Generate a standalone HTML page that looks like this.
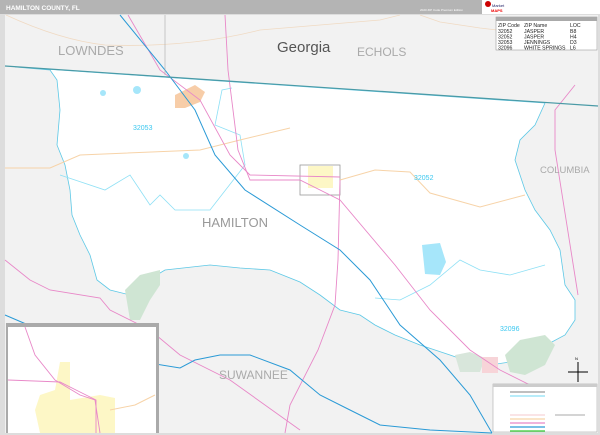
<!DOCTYPE html>
<html><head><meta charset="utf-8"><style>
html,body{margin:0;padding:0;width:600px;height:435px;overflow:hidden;background:#fff;font-family:"Liberation Sans",sans-serif}
</style></head><body>
<svg width="600" height="435" viewBox="0 0 600 435" xmlns="http://www.w3.org/2000/svg" font-family="Liberation Sans, sans-serif">
<rect x="0" y="0" width="600" height="14" fill="#b4b4b4"/>
<text x="6" y="10" font-size="6.5" font-weight="bold" fill="#fff">HAMILTON COUNTY, FL</text>
<text x="420" y="11" font-size="3" fill="#fff">2020 ZIP Code Premium Edition</text>
<rect x="482" y="0" width="118" height="14" fill="#fff"/>
<circle cx="488" cy="4" r="3" fill="#c00"/><text x="492" y="7" font-size="4" fill="#226">Market</text>
<text x="491" y="12" font-size="4" fill="#e00" font-weight="bold">MAPS</text>
<rect x="0" y="14" width="600" height="421" fill="#ddd"/>
<rect x="5" y="15" width="593" height="418" fill="#f2f2f2"/>
<!-- county -->
<path d="M15,67 L50,70 L57,80 L60,110 L57,145 L65,165 L70,190 L72,215 L80,235 L90,255 L97,280 L110,290 L130,295 L140,285 L165,270 L210,265 L240,268 L270,270 L300,282 L320,295 L340,310 L360,315 L375,325 L395,335 L420,345 L450,355 L470,362 L490,365 L510,362 L530,350 L550,343 L565,335 L575,320 L575,300 L565,285 L560,250 L550,230 L535,210 L525,190 L515,160 L520,140 L535,125 L545,103 Z" fill="#fff" stroke="#5cc8e6" stroke-width="0.8"/>
<!-- parks -->
<path d="M125,290 L140,275 L160,270 L160,285 L150,300 L140,320 L130,320 Z" fill="#cfe5d3"/>
<path d="M505,355 L520,340 L545,335 L555,345 L545,365 L525,375 L510,372 Z" fill="#cfe5d3"/>
<path d="M455,355 L470,352 L485,358 L480,372 L460,372 Z" fill="#d8e6db"/>
<rect x="482" y="357" width="16" height="16" fill="#f7d4d8"/>
<path d="M175,95 L195,85 L205,92 L200,102 L185,108 L175,108 Z" fill="#f7cda8"/>
<rect x="300" y="165" width="40" height="30" fill="#fff" stroke="#999" stroke-width="0.8"/>
<rect x="308" y="166" width="25" height="22" fill="#fdf7c6"/>
<!-- lake -->
<path d="M422,245 L440,243 L446,262 L440,275 L425,274 Z" fill="#a6e6fa"/>
<circle cx="186" cy="156" r="3" fill="#a6e6fa"/>
<circle cx="137" cy="90" r="4" fill="#a6e6fa"/>
<circle cx="103" cy="93" r="3" fill="#a6e6fa"/>
<!-- zip boundaries -->
<path d="M60,175 L75,180 L105,190 L130,175 L140,190 L150,205 L160,195 L175,210 L210,210 L245,165 L240,135 L215,125 L222,90 L232,88" fill="none" stroke="#8ee0f5" stroke-width="0.8"/>
<path d="M375,298 L400,300 L430,285 L460,260 L480,270 L510,275 L545,265" fill="none" stroke="#8ee0f5" stroke-width="0.8"/>
<!-- roads -->
<path d="M5,168 L50,168 L80,155 L200,150 L240,140 L290,128" fill="none" stroke="#f7d3a8" stroke-width="1"/>
<path d="M340,180 L375,170 L410,172 L430,193 L480,207 L525,195" fill="none" stroke="#f7d3a8" stroke-width="1"/>
<path d="M6,15 Q60,40 105,45 Q190,48 260,30 L380,20 L400,15" fill="none" stroke="#f0dac3" stroke-width="0.8"/>
<path d="M420,15 L440,22 L480,28 L497,30" fill="none" stroke="#f0dac3" stroke-width="0.8"/>
<!-- pink highways -->
<path d="M128,15 L160,70 L200,100 L230,155 L250,175 L340,177" fill="none" stroke="#e888c8" stroke-width="0.9"/>
<path d="M225,15 L228,70 L238,150 L250,180 L300,180 L340,200 L395,265 L430,310 L470,350 L500,370 L560,400" fill="none" stroke="#e888c8" stroke-width="0.9"/>
<path d="M340,180 L338,260 L335,305 L318,350 L290,405 L285,433" fill="none" stroke="#e888c8" stroke-width="0.9"/>
<path d="M575,85 L555,110 L555,150 L578,295" fill="none" stroke="#e888c8" stroke-width="0.9"/>
<path d="M5,260 L30,280 L50,290 L100,298 L110,310 L150,330 L180,355 L230,380 L300,430" fill="none" stroke="#e888c8" stroke-width="0.9"/>
<!-- blue rail -->
<path d="M120,15 L165,70 L195,110 L215,155 L245,190 L300,225 L340,250 L370,280 L400,325 L440,360 L470,395 L492,433" fill="none" stroke="#2a9ad6" stroke-width="1"/>
<path d="M5,315 L40,330 L100,355 L180,368 L195,360 L220,355 L250,355 L290,370 L320,395 L350,410 L380,425 L430,430 L492,433" fill="none" stroke="#2a9ad6" stroke-width="1"/>
<!-- state line -->
<path d="M5,66 L598,106" stroke="#4a9aa6" stroke-width="1.2"/>
<path d="M165,15 L165,75" stroke="#aaa" stroke-width="0.6"/>
<!-- labels -->
<text x="58" y="55" font-size="13" fill="#aaa">LOWNDES</text>
<text x="277" y="52" font-size="15" fill="#555">Georgia</text>
<text x="357" y="56" font-size="12" fill="#aaa">ECHOLS</text>
<text x="540" y="173" font-size="9.5" fill="#aaa">COLUMBIA</text>
<text x="202" y="227" font-size="13" fill="#999">HAMILTON</text>
<text x="219" y="379" font-size="12" fill="#aaa">SUWANNEE</text>
<text x="133" y="130" font-size="7" fill="#3cc8f0">32053</text>
<text x="414" y="180" font-size="7" fill="#3cc8f0">32052</text>
<text x="500" y="331" font-size="7" fill="#3cc8f0">32096</text>
<!-- table -->
<rect x="496" y="17" width="101" height="33" fill="#fff" stroke="#888" stroke-width="0.5"/>
<rect x="496" y="17" width="101" height="4" fill="#aaa"/>
<g font-size="5.2" fill="#222">
<text x="498" y="27">ZIP Code</text><text x="524" y="27">ZIP Name</text><text x="570" y="27">LOC</text>
<text x="498" y="33">32052</text><text x="524" y="33">JASPER</text><text x="570" y="33">B8</text>
<text x="498" y="38.5">32052</text><text x="524" y="38.5">JASPER</text><text x="570" y="38.5">H4</text>
<text x="498" y="44">32053</text><text x="524" y="44">JENNINGS</text><text x="570" y="44">D3</text>
<text x="498" y="49.5">32096</text><text x="524" y="49.5">WHITE SPRINGS</text><text x="570" y="49.5">L6</text>
</g>
<!-- inset -->
<rect x="6" y="323" width="153" height="110" fill="#aaa"/>
<rect x="8" y="327" width="148" height="106" fill="#fff"/>
<path d="M60,362 L70,362 L70,400 L100,395 L115,398 L115,433 L40,433 L35,410 L40,395 L55,390 Z" fill="#fdf7c6"/>
<path d="M25,327 L35,355 L55,380 L80,395 L95,400 L100,433" fill="none" stroke="#e888c8" stroke-width="0.9"/>
<path d="M8,380 L60,382 L80,392 L96,400 L96,433" fill="none" stroke="#e888c8" stroke-width="0.9"/>
<path d="M110,410 L135,405 L155,395" fill="none" stroke="#f7d3a8" stroke-width="1"/>
<!-- compass -->
<g stroke="#000" stroke-width="1"><path d="M578,362 L578,382 M568,372 L588,372"/></g>
<text x="575" y="360" font-size="4">N</text>
<!-- legend -->
<rect x="493" y="384" width="104" height="48" fill="#fff" stroke="#aaa" stroke-width="0.6"/>
<rect x="493" y="384" width="104" height="3" fill="#ccc"/>
<g stroke-width="1.2" fill="none">
<path d="M510,392 L545,392" stroke="#999"/>
<path d="M510,396 L545,396" stroke="#8ee0f5"/>
<path d="M510,415 L545,415" stroke="#f7d4d8"/>
<path d="M510,419 L545,419" stroke="#f7d3a8"/>
<path d="M510,423 L545,423" stroke="#e888c8"/>
<path d="M510,427 L545,427" stroke="#2a9ad6"/>
<path d="M510,431 L545,431" stroke="#3c3"/>
<path d="M555,415 L585,415" stroke="#555" stroke-width="0.5"/>
</g>
</svg>
</body></html>
